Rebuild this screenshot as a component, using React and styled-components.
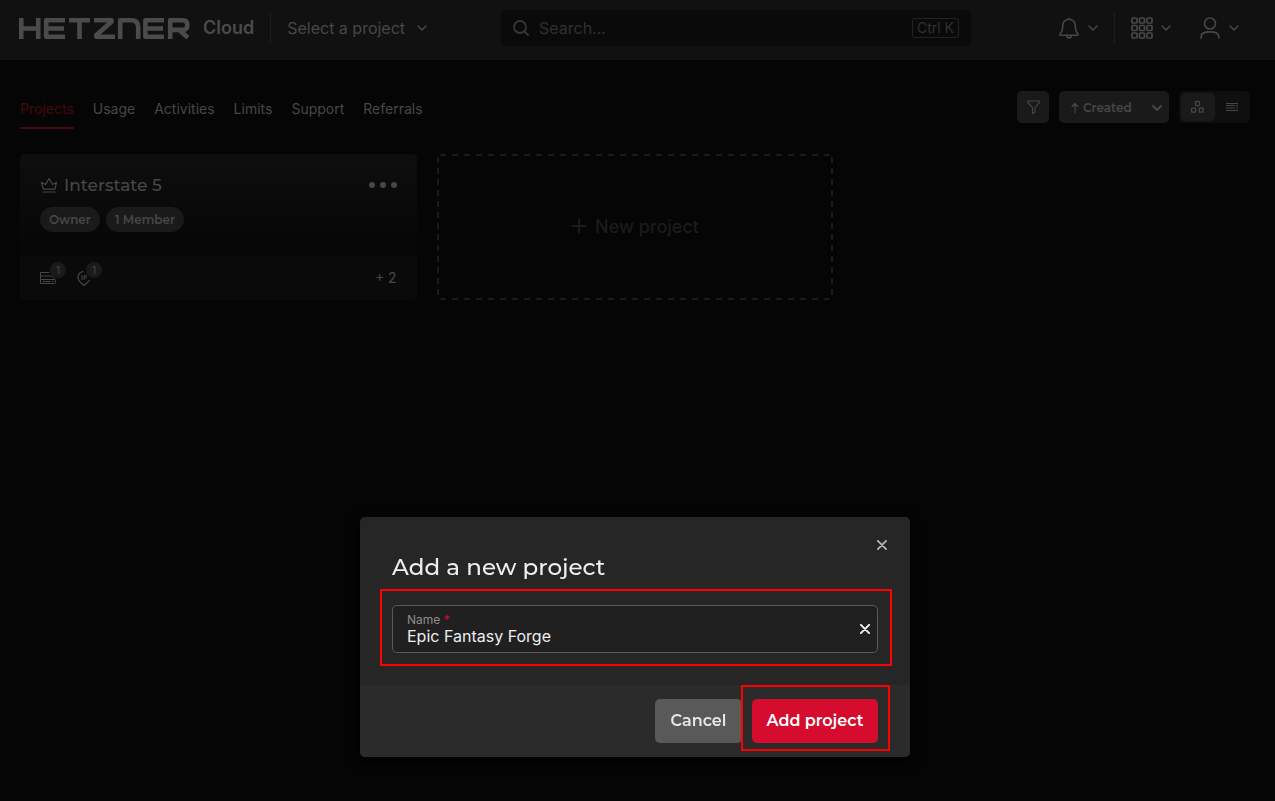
import React, { useState } from 'react';
import styled, { createGlobalStyle, css } from 'styled-components';

const body = "Inter, 'Liberation Sans', sans-serif";
const display = "Montserrat, Inter, 'Liberation Sans', sans-serif";

const GlobalStyle = createGlobalStyle`
  * { box-sizing: border-box; }
  body { margin: 0; background: #050505; color: #474747; font-family: ${body}; }
  button, input, select { font: inherit; color: inherit; }
  button { cursor: pointer; }
  svg { display: block; flex: none; }
`;

const Page = styled.div`
  min-height: 100vh;
  padding-right: 5px;
  background: #050505;
`;

const Header = styled.header`
  display: flex;
  align-items: center;
  height: 60px;
  margin-right: -5px;
  padding: 0 36px 4px 19px;
  background: #111111;
`;

const HeaderSide = styled.div`
  flex: ${(p) => (p.$end ? 'none' : 1)};
  display: flex;
  align-items: center;
`;

const Brand = styled.a`
  display: flex;
  align-items: center;
  gap: 13px;
  color: #4b4b4b;
  font-size: 18px;
  line-height: 24px;
  font-weight: 600;
  text-decoration: none;
`;

const Divider = styled.span`
  width: 1px;
  height: 32px;
  margin: 0 16px;
  background: #1d1d1d;
`;

const GhostButton = styled.button`
  display: flex;
  align-items: center;
  gap: ${(p) => p.$gap || 8}px;
  padding: 0;
  border: 0;
  background: none;
  font-size: 16px;
  line-height: 24px;
  white-space: nowrap;
`;

const Search = styled.label`
  display: flex;
  align-items: center;
  gap: 10px;
  flex: 0 1 470px;
  height: 36px;
  margin-right: 88px;
  padding: 0 12px;
  border-radius: 5px;
  background: #0a0a0a;
  color: #363636;
`;

const SearchInput = styled.input`
  flex: 1;
  min-width: 0;
  padding: 0;
  border: 0;
  outline: 0;
  background: none;
  font-size: 16px;
  line-height: 24px;
  &::placeholder { color: #303030; opacity: 1; }
`;

const Kbd = styled.kbd`
  padding: 0 4px;
  border: 1px solid #222222;
  border-radius: 3px;
  color: #303030;
  font-family: ${body};
  font-size: 14px;
  line-height: 18px;
`;

const Tools = styled.div`
  display: flex;
  align-items: center;
  gap: 29px;
`;

const Main = styled.main`
  padding: 31px 20px;
`;

const TopBar = styled.div`
  display: flex;
  justify-content: space-between;
  align-items: flex-start;
  margin-bottom: 25px;
`;

const Tabs = styled.nav`
  display: flex;
  gap: 19px;
`;

const Tab = styled.a`
  padding: 8px 0;
  border-bottom: 2px solid ${(p) => (p.$active ? '#47070f' : 'transparent')};
  color: ${(p) => (p.$active ? '#47070f' : '#474747')};
  font-size: 14px;
  line-height: 20px;
  text-decoration: none;
`;

const Controls = styled.div`
  display: flex;
  gap: 10px;
`;

const SquareButton = styled.button`
  display: grid;
  place-items: center;
  width: 32px;
  height: 32px;
  padding: 0;
  border: 0;
  border-radius: 5px;
  background: #1a1a1a;
`;

const SortBox = styled.label`
  display: flex;
  align-items: center;
  gap: 3px;
  width: 110px;
  height: 32px;
  padding: 1px 7px 0 11px;
  border-radius: 5px;
  background: #1a1a1a;
`;

const SortSelect = styled.select`
  flex: 1;
  min-width: 0;
  padding: 0;
  border: 0;
  outline: 0;
  appearance: none;
  background: none;
  font-family: ${display};
  font-size: 12px;
  line-height: 20px;
  font-weight: 600;
`;

const Segments = styled.div`
  display: flex;
  height: 32px;
  padding: 2px;
  border-radius: 5px;
  background: #0f0f0f;
`;

const Segment = styled.button`
  display: grid;
  place-items: center;
  width: ${(p) => (p.$active ? 34 : 33)}px;
  padding: 0;
  border: 0;
  border-radius: 5px;
  background: ${(p) => (p.$active ? '#1a1a1a' : 'none')};
`;

const Grid = styled.div`
  display: grid;
  grid-template-columns: repeat(3, 1fr);
  gap: 20px;
`;

const Card = styled.article`
  height: 146px;
  display: flex;
  flex-direction: column;
  border-radius: 5px;
  overflow: hidden;
  background: #0a0a0a;
`;

const CardBody = styled.div`
  flex: 1;
  padding: 19px 19px 0 20px;
  background: linear-gradient(#0e0e0e, #060606);
`;

const CardHead = styled.div`
  display: flex;
  align-items: center;
  gap: 6px;
`;

const CardTitle = styled.h2`
  flex: 1;
  margin: 0;
  font-family: ${display};
  font-size: 17px;
  line-height: 24px;
  font-weight: 500;
`;

const Chips = styled.div`
  display: flex;
  gap: 6px;
  margin-top: 10px;
`;

const Chip = styled.span`
  padding: 0 9px;
  border-radius: 13px;
  background: #1a1a1a;
  font-family: ${display};
  font-size: 12px;
  line-height: 25px;
  font-weight: 600;
`;

const CardFoot = styled.div`
  display: flex;
  align-items: center;
  gap: 20px;
  height: 44px;
  padding: 0 20px 1px;
  font-size: 14px;
`;

const Resource = styled.span`
  position: relative;
  width: 16px;
`;

const Count = styled.span`
  position: absolute;
  left: 10px;
  top: -8px;
  width: 16px;
  height: 16px;
  border-radius: 8px;
  background: #1a1a1a;
  font-size: 10px;
  line-height: 16px;
  text-align: center;
`;

const More = styled.span`
  margin-left: auto;
`;

const dash = '#1b1b1b';

const NewProject = styled.button`
  display: flex;
  align-items: center;
  justify-content: center;
  gap: 8px;
  padding: 0 0 2px;
  border: 0;
  border-radius: 5px;
  background:
    repeating-linear-gradient(90deg, ${dash} 0 6px, transparent 6px 12px) 50% 0 / calc(100% - 6px) 2px no-repeat,
    repeating-linear-gradient(90deg, ${dash} 0 6px, transparent 6px 12px) 50% 100% / calc(100% - 6px) 2px no-repeat,
    repeating-linear-gradient(${dash} 0 6px, transparent 6px 11px) 0 50% / 2px calc(100% - 6px) no-repeat,
    repeating-linear-gradient(${dash} 0 6px, transparent 6px 11px) 100% 50% / 2px calc(100% - 6px) no-repeat;
  color: #1b1b1b;
  font-size: 18px;
  font-weight: 500;
`;

const Overlay = styled.div`
  position: fixed;
  inset: 0;
  display: flex;
  align-items: flex-end;
  justify-content: center;
  padding: 0 5px 44px 0;
`;

const Dialog = styled.form`
  position: relative;
  width: 550px;
  border-radius: 5px;
  overflow: hidden;
  background: #262626;
  color: #eeeeee;
  box-shadow: 0 4px 12px #000000;
`;

const DialogBody = styled.div`
  padding: 32px;
`;

const DialogTitle = styled.h1`
  margin: 0 0 20px;
  font-family: ${display};
  font-size: 23px;
  line-height: 36px;
  font-weight: 500;
`;

const CloseButton = styled.button`
  position: absolute;
  top: 18px;
  right: 18px;
  display: grid;
  place-items: center;
  width: 20px;
  height: 20px;
  padding: 0;
  border: 0;
  background: none;
  color: #b4b4b4;
`;

const outline = css`
  &::after {
    content: '';
    position: absolute;
    inset: ${(p) => p.$mark};
    border: 2px solid #ff0000;
    pointer-events: none;
  }
`;

const Field = styled.div`
  position: relative;
  display: flex;
  align-items: center;
  height: 48px;
  padding: 0 5px 0 14px;
  border: 1px solid #5a5a5a;
  border-radius: 5px;
  background: #202020;
  ${outline}
`;

const FieldText = styled.div`
  flex: 1;
  display: flex;
  flex-direction: column;
  padding-top: 2px;
`;

const FieldLabel = styled.label`
  color: #8c8c8c;
  font-size: 12px;
  line-height: 12px;
`;

const Star = styled.span`
  color: #d50c2d;
`;

const FieldInput = styled.input`
  width: 100%;
  padding: 0;
  border: 0;
  outline: 0;
  background: none;
  font-size: 16px;
  line-height: 20px;
  height: 20px;
`;

const ClearButton = styled.button`
  display: grid;
  place-items: center;
  width: 14px;
  height: 20px;
  padding: 0;
  border: 0;
  background: none;
`;

const DialogFoot = styled.div`
  display: flex;
  justify-content: flex-end;
  gap: 10px;
  padding: 14px 32px;
  background: #2b2b2b;
`;

const Action = styled.button`
  width: ${(p) => (p.$primary ? 126 : 87)}px;
  height: 44px;
  padding: 0;
  border: 0;
  border-radius: 5px;
  background: ${(p) => (p.$primary ? '#d50c2d' : '#595959')};
  color: ${(p) => (p.$primary ? '#ffffff' : '#e8e8e8')};
  font-family: ${display};
  font-size: 16px;
  line-height: 24px;
  font-weight: 600;
`;

const Marked = styled.span`
  position: relative;
  display: flex;
  ${outline}
`;

const Icon = ({ w = 16, h = w, box = `0 0 ${w} ${h}`, sw = 1.5, children }) => (
  <svg width={w} height={h} viewBox={box} fill="none" stroke="currentColor" strokeWidth={sw}
    strokeLinecap="round" strokeLinejoin="round" aria-hidden="true">{children}</svg>
);

const Logo = () => (
  <Icon w={171} h={21} sw={4.6}>
    <g strokeLinecap="butt">
      <path d="M2.3 0v21M19.2 0v21M2.3 10.5h17M46 2.3H27.2v16.4H46M27.2 10.5H45M50 2.3h21M60.5 2.3V21M75 2.3h17.500v1.500L77.200 17.300v1.400H96M101.200 21V2.300h11q7 0 7 7V21M145 2.300h-18.600v16.400H145M126.400 10.500H144M151.200 21V2.300h12.600q4.600 0 4.600 4.800t-4.600 4.800h-12M160 11.800l9 8" />
    </g>
  </Icon>
);

const Chevron = ({ sw = 1.5 }) => <Icon w={10} h={6} sw={sw}><path d="M1 1l4 4 4-4" /></Icon>;
const Cross = ({ sw = 1.8 }) => <Icon w={10} sw={sw}><path d="M.9 .9l8.200 8.200M9.100 .9l-8.200 8.200" /></Icon>;

const Bell = () => (
  <Icon w={20} h={22} sw={1.6}>
    <path d="M10 1.2v.8M3.7 8.5a6.3 6.3 0 0 1 12.6 0c0 5 .7 6.6 2.5 8.2.7.7.3 1.6-.6 1.6H1.8c-.9 0-1.3-.9-.6-1.6 1.8-1.6 2.5-3.2 2.5-8.2zM7.8 18.5c0 3.2 4.4 3.2 4.4 0" />
  </Icon>
);

const Apps = () => (
  <Icon w={22} sw={1.7}>
    {[1, 8.5, 16].map((y) => [1, 8.5, 16].map((x) => (
      <rect key={`${x}-${y}`} x={x} y={y} width="5" height="5" rx="1" />
    )))}
  </Icon>
);

const User = () => (
  <Icon w={20} h={22} sw={1.7}>
    <circle cx="10" cy="6.5" r="5.5" />
    <path d="M1.2 21v-1.5c0-3.3 3-4.6 8.8-4.6s8.8 1.3 8.8 4.6V21" />
  </Icon>
);

const tabs = ['Projects', 'Usage', 'Activities', 'Limits', 'Support', 'Referrals'];

export default function App() {
  const [query, setQuery] = useState('');
  const [name, setName] = useState('Epic Fantasy Forge');

  return (
    <>
      <GlobalStyle />
      <Page>
        <Header>
          <HeaderSide>
            <Brand href="#" aria-label="Hetzner Cloud"><Logo />Cloud</Brand>
            <Divider />
            <GhostButton $gap={12}>Select a project<Chevron /></GhostButton>
          </HeaderSide>
          <Search>
            <Icon w={16} sw={1.8}><circle cx="7" cy="7" r="6" /><path d="M11.5 11.5l3.5 3.5" /></Icon>
            <SearchInput aria-label="Search" placeholder="Search..." value={query} onChange={(e) => setQuery(e.target.value)} />
            <Kbd>Ctrl K</Kbd>
          </Search>
          <HeaderSide $end>
            <GhostButton aria-label="Notifications" $gap={9}><Bell /><Chevron /></GhostButton>
            <Divider />
            <Tools>
              <GhostButton aria-label="Applications"><Apps /><Chevron /></GhostButton>
              <GhostButton aria-label="Account" $gap={9}><User /><Chevron /></GhostButton>
            </Tools>
          </HeaderSide>
        </Header>

        <Main>
          <TopBar>
            <Tabs>
              {tabs.map((t, i) => <Tab key={t} href="#" $active={i === 0}>{t}</Tab>)}
            </Tabs>
            <Controls>
              <SquareButton aria-label="Filter">
                <Icon w={14} sw={1.1}><path d="M1.5 1h12v1.2L9 7.5V12l-2.5 1.5v-6L1.5 2.2z" /></Icon>
              </SquareButton>
              <SortBox>
                <Icon w={10} sw={1.2}><path d="M5 9.5v-9M2 3.500l3-3 3 3" /></Icon>
                <SortSelect aria-label="Sort by"><option>Created</option></SortSelect>
                <Chevron sw={2} />
              </SortBox>
              <Segments>
                <Segment $active aria-label="Grid view">
                  <Icon w={14} h={12} sw={1.3}>
                    <rect x="4.5" y=".6" width="4" height="4" rx=".5" />
                    <rect x=".6" y="7.2" width="4" height="4" rx=".5" />
                    <rect x="8.2" y="7.2" width="4" height="4" rx=".5" />
                  </Icon>
                </Segment>
                <Segment aria-label="List view">
                  <Icon w={12} h={8} sw={1}>
                    <g strokeLinecap="butt"><path d="M0 .5h12M0 2.500h9M10 2.500h2M0 5h9M10 5h2M0 7.500h12" /></g>
                  </Icon>
                </Segment>
              </Segments>
            </Controls>
          </TopBar>

          <Grid>
            <Card>
              <CardBody>
                <CardHead>
                  <Icon w={18} sw={1.2}>
                    <path d="M3.2 13.2L1.5 6.500l4 2L9 2.500l3.500 6 4-2-1.700 6.700zM3 16h12" />
                  </Icon>
                  <CardTitle>Interstate 5</CardTitle>
                  <GhostButton aria-label="Project menu">
                    <svg width="29" height="6" fill="currentColor"><circle cx="3" cy="3" r="3" /><circle cx="14" cy="3" r="3" /><circle cx="25" cy="3" r="3" /></svg>
                  </GhostButton>
                </CardHead>
                <Chips><Chip>Owner</Chip><Chip>1 Member</Chip></Chips>
              </CardBody>
              <CardFoot>
                <Resource>
                  <Icon w={16} sw={1}><path d="M9 2.500H.5v11h14a1 1 0 0 0 1-1v-2a1 1 0 0 0-1-1H.5M.5 6h11l3 3M3 11.500h7M12.500 11.500h1" /></Icon>
                  <Count>1</Count>
                </Resource>
                <Resource>
                  <Icon w={16} sw={1.3}><path d="M7 1.700a6 6 0 0 0-5 6c0 3 3 5.300 6 7.800 2-1.500 4-3 5.200-5" /><path strokeWidth="1" d="M6 5.500v4M8.200 9.500v-4h1.300a1.200 1.200 0 0 1 0 2.400H8.200" /></Icon>
                  <Count>1</Count>
                </Resource>
                <More>+ 2</More>
              </CardFoot>
            </Card>
            <NewProject>
              <Icon w={16} sw={2}><path d="M8 1.500v13M1.500 8h13" /></Icon>
              New project
            </NewProject>
          </Grid>
        </Main>
      </Page>

      <Overlay>
        <Dialog role="dialog" aria-labelledby="dialog-title" onSubmit={(e) => e.preventDefault()}>
          <CloseButton type="button" aria-label="Close"><Cross /></CloseButton>
          <DialogBody>
            <DialogTitle id="dialog-title">Add a new project</DialogTitle>
            <Field $mark="-17px -15px -14px -13px">
              <FieldText>
                <FieldLabel htmlFor="project-name">Name <Star>*</Star></FieldLabel>
                <FieldInput id="project-name" value={name} onChange={(e) => setName(e.target.value)} />
              </FieldText>
              <ClearButton type="button" aria-label="Clear name" onClick={() => setName('')}><Cross sw={2} /></ClearButton>
            </Field>
          </DialogBody>
          <DialogFoot>
            <Action type="button">Cancel</Action>
            <Marked $mark="-14px -12px -8px -11px"><Action $primary type="submit">Add project</Action></Marked>
          </DialogFoot>
        </Dialog>
      </Overlay>
    </>
  );
}
